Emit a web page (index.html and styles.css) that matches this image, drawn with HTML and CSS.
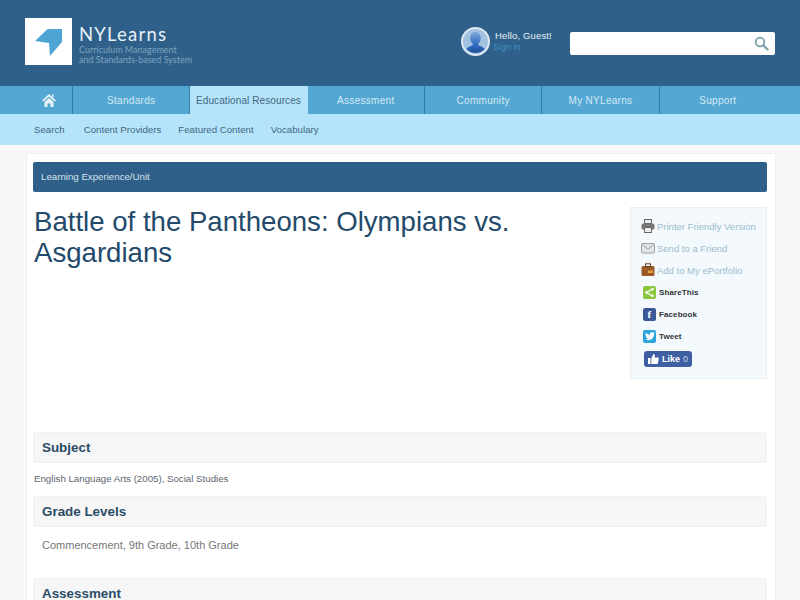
FILE: index.html
```html
<!DOCTYPE html>
<html>

<head>
  <meta charset="utf-8">
  <title>Battle of the Pantheons: Olympians vs. Asgardians</title>
  <link rel="stylesheet" href="styles.css">
</head>

<body>
  <header class="masthead">
    <div class="logo">
      <div class="logo-box">
        <svg width="47" height="47" viewBox="0 0 47 47">
          <path d="M10 23 L22 11.500 Q23 11 24 11 L37 11 L37 24 L25 38 L24 25 Z" fill="#4ea5d3" />
        </svg>
      </div>
      <div class="logo-text">
        <div class="logo-name">NYLearns</div>
        <div class="logo-sub">Curriculum Management<br>and Standards-based System</div>
      </div>
    </div>

    <div class="user">
      <svg class="avatar" width="29" height="29" viewBox="0 0 29 29">
        <defs>
          <linearGradient id="head" x1="0" y1="0" x2="0" y2="1">
            <stop offset="0" stop-color="#7fa6d8" />
            <stop offset="0.6" stop-color="#2f6cc0" />
            <stop offset="1" stop-color="#1f4f9c" />
          </linearGradient>
        </defs>
        <circle cx="14.5" cy="14.5" r="14.5" fill="#dbe8f1" />
        <circle cx="14.5" cy="14.5" r="12.5" fill="#a3c2e2" />
        <path d="M14.5 5c3.400 0 5.300 2.600 5.300 5.800 0 2.600-1 4.600-2.500 5.800v1.700c2.500 1 5 2 6.300 3.600a12.500 12.500 0 0 1-18.200 0c1.300-1.600 3.800-2.600 6.300-3.600v-1.700c-1.500-1.200-2.500-3.200-2.500-5.800 0-3.200 1.900-5.800 5.300-5.800z" fill="url(#head)" />
      </svg>
      <div class="user-text">
        <div class="hello">Hello, Guest!</div>
        <a class="signin">Sign in</a>
      </div>
    </div>

    <div class="search">
      <svg width="15" height="15" viewBox="0 0 15 15">
        <circle cx="6" cy="6" r="4.300" fill="none" stroke="#7ea0aa" stroke-width="1.800" />
        <path d="M9.500 9.500 L13.500 13.500" stroke="#7ea0aa" stroke-width="2.400" stroke-linecap="round" />
      </svg>
    </div>
  </header>

  <nav class="mainnav">
    <a class="nav-home">
      <svg width="14" height="13" viewBox="0 0 14 13">
        <path d="M10 .5 H11.500 V3.500 L10 2.200 Z" fill="#e6f2f8" />
        <path d="M7 0 L14 6.500 L12.500 7.500 L7 2.500 L1.500 7.500 L0 6.500 Z M2.500 8 L7 4 L11.500 8 V13 H8.500 V9.500 H5.500 V13 H2.500 Z" fill="#e6f2f8" />
      </svg>
    </a>
    <a class="nav-item">Standards</a>
    <a class="nav-item active">Educational Resources</a>
    <a class="nav-item">Assessment</a>
    <a class="nav-item">Community</a>
    <a class="nav-item">My NYLearns</a>
    <a class="nav-item">Support</a>
  </nav>

  <div class="subnav">
    <a>Search</a>
    <a>Content Providers</a>
    <a>Featured Content</a>
    <a>Vocabulary</a>
  </div>

  <main class="page">
    <div class="type-bar">Learning Experience/Unit</div>

    <div class="top">
      <h1>Battle of the Pantheons: Olympians vs. Asgardians</h1>

      <aside class="tools">
        <div class="tool">
          <svg width="14" height="14" viewBox="0 0 14 14">
            <rect x="3.500" y="0.500" width="7" height="4" fill="#eee" stroke="#666" />
            <rect x="0.500" y="4.500" width="13" height="6" rx="1.500" fill="#777" />
            <rect x="3.500" y="8.500" width="7" height="5" fill="#eee" stroke="#666" />
          </svg>
          <span>Printer Friendly Version</span>
        </div>
        <div class="tool">
          <svg width="14" height="14" viewBox="0 0 14 14">
            <rect x="0.500" y="2.500" width="13" height="9.500" rx="1" fill="#e4e4e4" stroke="#a0a0a0" />
            <path d="M1 3.500 L7 8 L13 3.500" fill="none" stroke="#a0a0a0" />
          </svg>
          <span>Send to a Friend</span>
        </div>
        <div class="tool">
          <svg width="14" height="14" viewBox="0 0 14 14">
            <rect x="0.500" y="3" width="13" height="10" rx="1.500" fill="#9a5a25" />
            <rect x="4.500" y="0.800" width="5" height="3" fill="none" stroke="#6a3d18" />
            <rect x="7" y="7.500" width="5" height="2.500" fill="#e8a33a" />
          </svg>
          <span>Add to My ePortfolio</span>
        </div>
        <div class="social">
          <span class="social-icon share">
            <svg width="9" height="9" viewBox="0 0 9 9">
              <path d="M7.500 1 L1.500 4.500 L7.500 8" fill="none" stroke="#fff" stroke-width="1.200" />
              <circle cx="7.500" cy="1.300" r="1.300" fill="#fff" />
              <circle cx="1.500" cy="4.500" r="1.300" fill="#fff" />
              <circle cx="7.500" cy="7.700" r="1.300" fill="#fff" />
            </svg>
          </span>
          <span>ShareThis</span>
        </div>
        <div class="social">
          <span class="social-icon fb">f</span>
          <span>Facebook</span>
        </div>
        <div class="social">
          <span class="social-icon tw">
            <svg width="10" height="9" viewBox="0 0 10 9">
              <path d="M10 1.200c-.4.200-.8.300-1.200.300.400-.300.800-.700.900-1.200-.400.200-.800.400-1.300.500A2 2 0 0 0 5 2.700C3.300 2.600 1.800 1.800.7.500.200 1.500.400 2.600 1.300 3.200c-.300 0-.600-.100-.900-.200 0 1 .700 1.800 1.600 2-.300.100-.600.100-.900 0 .300.800 1 1.400 1.900 1.400C2.300 7.100 1.200 7.400 0 7.300 3.800 9.700 9.100 7.600 9 2.200c.400-.300.700-.600 1-1z" fill="#fff" />
            </svg>
          </span>
          <span>Tweet</span>
        </div>
        <div class="like">
          <svg width="11" height="10" viewBox="0 0 11 10">
            <path d="M0 4 H2.500 V10 H0 Z M3.300 4.200 L5.500 0 Q7 0 7 1.500 L6.500 3.500 H10 Q11 3.500 10.800 4.600 L10 9 Q9.800 10 9 10 H3.300 Z" fill="#fff" />
          </svg>
          <b>Like</b><span class="like-count">0</span>
        </div>
      </aside>
    </div>

    <h2 class="section-title">Subject</h2>
    <p class="small-text">English Language Arts (2005), Social Studies</p>

    <h2 class="section-title">Grade Levels</h2>
    <p class="body-text">Commencement, 9th Grade, 10th Grade</p>

    <h2 class="section-title">Assessment</h2>
  </main>
</body>

</html>
```
FILE: styles.css
```css
html,
body {
  height: 600px;
  overflow: hidden;
}

body {
  margin: 0;
  background: #f8f8f8;
  font-family: "Liberation Sans", Arial, sans-serif;
  color: #333;
}

a {
  text-decoration: none;
}

/* top header */
.masthead {
  height: 86px;
  background: #2f6089;
  display: flex;
  align-items: flex-start;
  box-sizing: border-box;
  padding: 18px 25px 0;
}

.logo {
  display: flex;
  width: 436px;
}

.logo-box {
  width: 47px;
  height: 47px;
  background: #fff;
}

.logo-box svg {
  display: block;
}

.logo-text {
  margin-left: 7px;
  padding-top: 4.5px;
}

.logo-name {
  font-family: Lato, sans-serif;
  font-size: 18.5px;
  line-height: 22.5px;
  letter-spacing: 1.2px;
  color: #e8f1f7;
}

.logo-sub {
  font-family: Lato, sans-serif;
  font-size: 9px;
  line-height: 10px;
  color: #7ba3bf;
}

.user {
  display: flex;
  width: 109px;
  margin-top: 9px;
}

.user-text {
  margin-left: 5px;
  font-size: 9.5px;
  letter-spacing: 0.15px;
}

.hello {
  color: #e6eef4;
  margin-top: 3px;
  line-height: 12px;
}

.signin {
  display: block;
  color: #4490c0;
  font-size: 9px;
  line-height: 11px;
  letter-spacing: 0;
  margin-left: -2px;
}

.search {
  width: 205px;
  height: 23px;
  margin-top: 14px;
  background: #fff;
  border-radius: 2px;
  display: flex;
  align-items: center;
  justify-content: flex-end;
  box-sizing: border-box;
  padding-right: 6px;
}

/* nav rows */
.mainnav {
  height: 28px;
  background: #54a7d2;
  display: flex;
  font-size: 10px;
  letter-spacing: 0.3px;
}

.nav-home {
  width: 30px;
  padding-left: 42px;
  display: flex;
  align-items: center;
  border-right: 1px solid #2f7fae;
}

.nav-item {
  width: 116.33px;
  border-right: 1px solid #2f7fae;
  color: #d3e9f5;
  display: flex;
  align-items: center;
  justify-content: center;
}

.nav-item:last-child {
  border-right: 0;
}

.nav-item.active {
  background: #b5e3fa;
  color: #44687f;
  letter-spacing: 0.1px;
  border-right: 1px solid #b5e3fa;
}

.subnav {
  height: 31px;
  background: #b5e3fa;
  display: flex;
  align-items: center;
  gap: 17px;
  padding-left: 34px;
  box-sizing: border-box;
  font-size: 9.7px;
  color: #44687f;
}

.subnav a:first-child {
  margin-right: 2px;
}

/* content */
.page {
  width: 750px;
  height: 460px;
  box-sizing: border-box;
  margin: 8px 0 0 26px;
  padding: 8px 8px 0 6px;
  background: #fff;
  border: 1px solid #f0f0f0;
  border-bottom: 0;
}

.type-bar {
  height: 30px;
  line-height: 29px;
  background: #2f6089;
  border-radius: 2px;
  padding-left: 8px;
  font-size: 9.7px;
  color: #d5e3ed;
}

.top {
  display: flex;
  justify-content: space-between;
  height: 240px;
  padding-top: 14px;
  box-sizing: border-box;
}

h1 {
  margin: 0 0 0 1px;
  width: 560px;
  font-size: 27.6px;
  line-height: 31px;
  font-weight: normal;
  color: #234a6a;
}

.tools {
  width: 137px;
  height: 172px;
  box-sizing: border-box;
  margin-top: 1px;
  padding: 7px 0 0 10px;
  background: #f3f9fd;
  border: 1px solid #e8eff3;
  font-size: 9.5px;
}

.tool {
  display: flex;
  align-items: center;
  gap: 2px;
  height: 22px;
  color: #9dbccc;
}

.social {
  display: flex;
  align-items: center;
  gap: 3px;
  height: 22px;
  padding-left: 2px;
  font-size: 8px;
  font-weight: bold;
  letter-spacing: 0.1px;
  color: #333;
}

.social-icon {
  width: 13px;
  height: 13px;
  border-radius: 2px;
  display: flex;
  align-items: center;
  justify-content: center;
  color: #fff;
}

.share {
  background: #8cc63f;
}

.fb {
  background: #3b5998;
  font-size: 11px;
  font-family: "Liberation Serif", serif;
}

.tw {
  background: #2ba3dc;
}

.like {
  display: inline-flex;
  align-items: center;
  gap: 3px;
  margin: 4px 0 0 3px;
  height: 16px;
  width: 48px;
  padding-left: 4px;
  box-sizing: border-box;
  background: #3f5fa3;
  border-radius: 3px;
  font-size: 9px;
  color: #fff;
}

.like-count {
  color: #c5d3ee;
  font-size: 9px;
}

.section-title {
  margin: 0;
  height: 31px;
  line-height: 30px;
  padding-left: 8px;
  box-sizing: border-box;
  background: #f6f6f6;
  border: 1px solid #f0f0f0;
  border-radius: 2px;
  font-size: 13.4px;
  font-weight: bold;
  color: #2b4c69;
}

.small-text {
  margin: 10px 0 11px 1px;
  font-size: 9.7px;
  line-height: 12px;
  color: #5b6770;
}

.body-text {
  margin: 12px 0 26px 9px;
  font-size: 11px;
  line-height: 13px;
  color: #777;
}
```
